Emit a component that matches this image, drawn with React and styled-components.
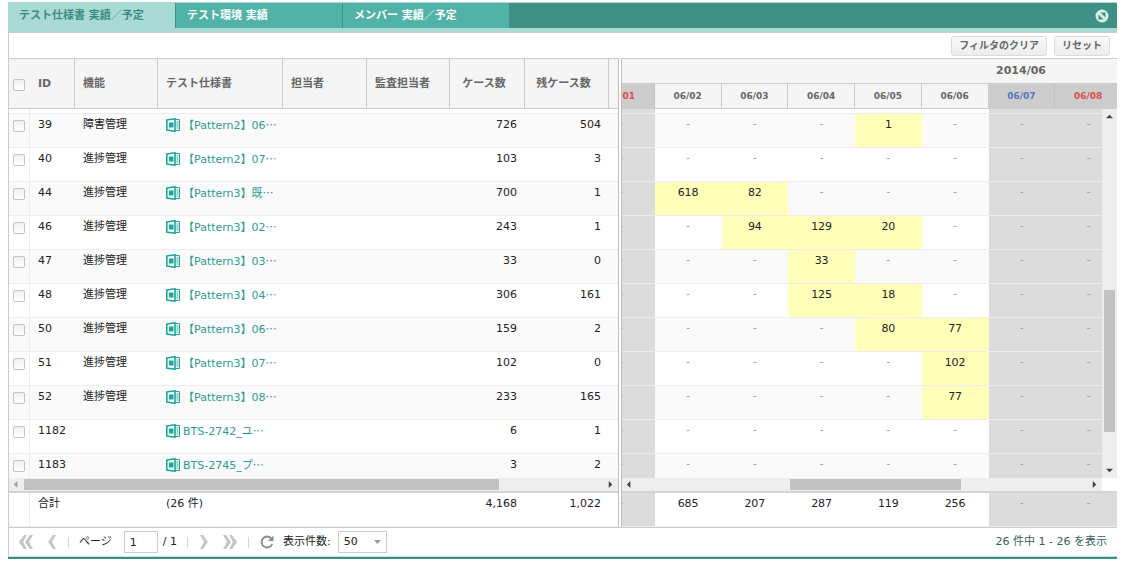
import React from "react";
import styled, { createGlobalStyle, css } from "styled-components";

const Global = createGlobalStyle`
  *, *::before, *::after { box-sizing: border-box; }
  body {
    margin: 0;
    background: #fff;
    color: #222;
    font: 11px/14px "DejaVu Sans", "Noto Sans CJK JP", sans-serif;
  }
  button, input, select { font: inherit; color: inherit; margin: 0; }
`;

const Page = styled.div`
  padding: 2px 7px 0 8px;
`;

const Panel = styled.section`
  border-bottom: 2px solid #368f83;
`;

const TabBar = styled.nav`
  display: flex;
  align-items: stretch;
  height: 31px;
  background: #3f9183;
  border-top: 1px solid #a9dad5;
  border-bottom: 1px solid #c8cfce;
  box-shadow: inset 0 -4px #a9dad5;
`;

const Tab = styled.button`
  width: 167px;
  height: ${(p) => (p.$active ? 29 : 25)}px;
  padding: 0 11px ${(p) => (p.$active ? 4 : 0)}px;
  border: 0;
  border-left: ${(p) => (p.$active ? 0 : 1)}px solid #3f9183;
  background: ${(p) => (p.$active ? "#a9dad5" : "#50b3a6")};
  color: ${(p) => (p.$active ? "#3b8c80" : "#fff")};
  font-weight: bold;
  text-align: left;
  white-space: nowrap;
`;

const ToolButton = styled.button`
  display: grid;
  place-items: center;
  width: 14px;
  height: 26px;
  margin: 0 8px 0 auto;
  padding: 0;
  border: 0;
  background: none;
`;

const Frame = styled.div`
  border-left: 1px solid #ccc;
`;

const Actions = styled.div`
  display: flex;
  justify-content: flex-end;
  align-items: center;
  gap: 7px;
  height: 25px;
  padding-right: 7px;
`;

const ActionButton = styled.button`
  height: 20px;
  padding: 0 7px;
  border: 1px solid #dcdcdc;
  border-radius: 3px;
  background: linear-gradient(#f8f8f8, #ededed);
  color: #666;
  font-size: 10px;
  font-weight: bold;
  line-height: 16px;
`;

const Panes = styled.div`
  display: grid;
  grid-template-columns: 610px minmax(0, 1fr);
  gap: 2px;
  border-bottom: 1px solid #ccc;
`;

const Pane = styled.div`
  min-width: 0;
  border: 0 solid #c0c0c0;
  border-right-width: ${(p) => (p.$side === "left" ? 1 : 0)}px;
  border-left-width: ${(p) => (p.$side === "left" ? 0 : 1)}px;
`;

const HeadClip = styled.div`
  height: 51px;
  overflow: hidden;
  background: #f5f5f5;
  border-top: 1px solid #ccc;
  border-bottom: 1px solid #ccc;
`;

const BodyRow = styled.div`
  display: flex;
  height: 369px;
`;

const BodyClip = styled.div`
  flex: 1;
  min-width: 0;
  overflow: hidden;
`;

const FootClip = styled.div`
  height: 36px;
  overflow: hidden;
  border-top: 2px solid #d4d4d4;
`;

const Grid = styled.table`
  width: 100%;
  table-layout: fixed;
  border-collapse: separate;
  border-spacing: 0;
`;

/* The calendar is scrolled sideways, so half of its first day is cut off. */
const CalendarGrid = styled(Grid)`
  width: calc(100% + ${(p) => (p.$bar ? 54 : 39)}px);
  margin-left: -34px;
`;

const HeadCell = styled.th`
  height: 49px;
  padding: 0 ${(p) => (p.$align ? 14 : 8)}px 0 8px;
  border-right: ${(p) => (p.$open ? 0 : 1)}px solid #ccc;
  color: #666;
  text-align: ${(p) => p.$align || "left"};
  white-space: nowrap;
`;

const CheckHead = styled.th`
  padding: 2px 0 0 4px;
`;

const MonthCell = styled.th`
  height: 25px;
  padding: 0 0 0 332px;
  border-bottom: 1px solid #ccc;
  color: #666;
`;

const dayColor = { sat: "#5577bb", sun: "#dd4b4b" };

const DayCell = styled.th`
  height: 24px;
  padding: 0;
  border-right: 1px solid ${(p) => (p.$day ? "#c2c2c2" : "#ccc")};
  background: ${(p) => (p.$day ? "#cdcdcd" : "#f5f5f5")};
  color: ${(p) => dayColor[p.$day] || "#666"};
  font-size: 9px;
`;

const Row = styled.tr`
  background: ${(p) => (p.$odd ? "#fafafa" : "#fff")};
`;

const cellBox = css`
  height: ${(p) => (p.$strip ? 5 : 34)}px;
  border-bottom: 1px solid #ededed;
  vertical-align: top;
  white-space: nowrap;
  overflow: hidden;
`;

const Cell = styled.td`
  ${cellBox}
  padding: ${(p) => (p.$strip ? 0 : 4)}px 8px 0;
  text-align: ${(p) => p.$align || "left"};
`;

const CheckCell = styled.td`
  ${cellBox}
  padding: ${(p) => (p.$strip ? 0 : 6)}px 0 0 4px;
  border-right: 1px solid #ededed;
`;

const PlanCell = styled.td`
  ${cellBox}
  padding: ${(p) => (p.$strip ? 0 : p.$empty ? 3 : 4)}px 0 0;
  background: ${(p) => (p.$off ? "#dcdcdc" : p.$hot ? "#ffffb9" : "transparent")};
  color: ${(p) => (p.$empty ? "#999" : "#222")};
  font-size: ${(p) => (p.$empty ? 10 : 11)}px;
  text-align: center;
`;

const Check = styled.input.attrs({ type: "checkbox" })`
  appearance: none;
  display: block;
  width: 12px;
  height: 12px;
  border: 1px solid #c4c4c4;
  border-radius: 2px;
  background: linear-gradient(#f0f0f0, #fff);
`;

const SpecLink = styled.a`
  display: flex;
  align-items: center;
  gap: 3px;
  height: 14px;
  color: #2b9d8d;
  text-decoration: none;

  & > svg { flex: none; }
`;

const SpecCell = styled(Cell)`
  padding-right: 0;
`;

const More = styled.span`
  font-family: "Noto Sans CJK JP", sans-serif;
`;

const HBar = styled.div`
  display: flex;
  align-items: center;
  height: 13px;
  margin-right: ${(p) => (p.$corner ? 15 : 0)}px;
  background: #eee;
`;

const VBar = styled.div`
  display: flex;
  flex-direction: column;
  align-items: center;
  width: 15px;
  background: #eee;
`;

const Track = styled.div`
  flex: 1;
  display: flex;
  flex-direction: ${(p) => (p.$vertical ? "column" : "row")};
`;

const Thumb = styled.div`
  flex: 0 0 ${(p) => p.$size}%;
  min-width: 11px;
  min-height: 11px;
  background: #c1c1c1;
`;

const Before = styled.div`
  flex: 0 0 ${(p) => p.$size}%;
`;

const ArrowBox = styled.span`
  display: grid;
  place-items: center;
  width: 15px;
  height: 15px;
  color: ${(p) => (p.$dim ? "#a0a0a0" : "#444")};
`;

const Pager = styled.footer`
  display: flex;
  align-items: center;
  height: 29px;
  padding: 0 10px 0 9px;
  border-bottom: 1px solid #d5dddb;
`;

const PagerButton = styled.button`
  display: grid;
  place-items: center;
  width: ${(p) => p.$w}px;
  height: 22px;
  padding: 0;
  border: 0;
  background: none;
`;

const Sep = styled.span`
  width: 1px;
  height: 11px;
  margin: 0 10px;
  background: #d8d8d8;
`;

const Gap = styled.span`
  width: ${(p) => p.$w}px;
`;

const PageInput = styled.input`
  width: 34px;
  height: 22px;
  margin: 0 5px 0 12px;
  padding: 0 5px;
  border: 1px solid #ccc;
  background: #fff;
`;

const SelectWrap = styled.span`
  display: grid;
  margin-left: 7px;
  align-items: center;

  & > * { grid-area: 1 / 1; }
  & > svg { justify-self: end; margin-right: 6px; pointer-events: none; }
`;

const Select = styled.select`
  appearance: none;
  width: 49px;
  height: 22px;
  padding: 0 5px;
  border: 1px solid #ccc;
  border-radius: 0;
  background: #fff;
`;

const Status = styled.span`
  margin-left: auto;
  color: #35605a;
`;

const arrows = {
  left: "M5 0v8L1 4z",
  right: "M2 0v8l4-4z",
  up: "M0 6h8L4 2z",
  down: "M0 2h8L4 6z",
};

const Arrow = ({ dir, dim }) => (
  <ArrowBox $dim={dim}>
    <svg width="7" height="7" viewBox="0 0 8 8" aria-hidden="true">
      <path d={arrows[dir]} fill="currentColor" />
    </svg>
  </ArrowBox>
);

const SheetIcon = () => (
  <svg width="14" height="14" viewBox="0 0 14 14" aria-hidden="true">
    <path d="M.8 2 9 .8v12.400L.8 12z" fill="#fff" stroke="#1ba896" strokeWidth="1.600" />
    <path d="M3 4.500h4.500v5H3z" fill="#1ba896" />
    <path d="M9 1.500h4.500v11H9" fill="none" stroke="#1ba896" />
    <path d="M10.500 4h2M10.500 6h2M10.500 8h2M10.500 10h2" stroke="#1ba896" />
  </svg>
);

const Chevron = ({ double, back }) => (
  <svg width={double ? 14 : 8} height="14" viewBox={double ? "0 0 14 14" : "0 0 8 14"} aria-hidden="true">
    <g fill="#c6c6c6" transform={back ? `translate(${double ? 14 : 8} 0) scale(-1 1)` : undefined}>
      <path d="M0 0h3l5 7-5 7H0l4-7z" />
      {double && <path d="M6 0h3l5 7-5 7H6l4-7z" />}
    </g>
  </svg>
);

const specs = [
  ["39", "障害管理", "【Pattern2】06", "726", "504", [0, 0, 0, 1, 0]],
  ["40", "進捗管理", "【Pattern2】07", "103", "3", [0, 0, 0, 0, 0]],
  ["44", "進捗管理", "【Pattern3】既", "700", "1", [618, 82, 0, 0, 0]],
  ["46", "進捗管理", "【Pattern3】02", "243", "1", [0, 94, 129, 20, 0]],
  ["47", "進捗管理", "【Pattern3】03", "33", "0", [0, 0, 33, 0, 0]],
  ["48", "進捗管理", "【Pattern3】04", "306", "161", [0, 0, 125, 18, 0]],
  ["50", "進捗管理", "【Pattern3】06", "159", "2", [0, 0, 0, 80, 77]],
  ["51", "進捗管理", "【Pattern3】07", "102", "0", [0, 0, 0, 0, 102]],
  ["52", "進捗管理", "【Pattern3】08", "233", "165", [0, 0, 0, 0, 77]],
  ["1182", "", "BTS-2742_ユ", "6", "1", [0, 0, 0, 0, 0]],
  ["1183", "", "BTS-2745_プ", "3", "2", [0, 0, 0, 0, 0]],
];

const days = [
  ["06/01", "sun"], ["06/02"], ["06/03"], ["06/04"],
  ["06/05"], ["06/06"], ["06/07", "sat"], ["06/08", "sun"],
];

const Cols = () => (
  <colgroup>
    {[21, 45, 83, 125, 84, 83, 75, 84, 9].map((w, i) => (
      <col key={i} width={w} />
    ))}
  </colgroup>
);

const DayCells = ({ values, total, strip }) =>
  days.map(([date, day], i) => {
    const value = (!day && values[i - 1]) || 0;
    return (
      <PlanCell key={date} $strip={strip} $off={!!day} $hot={!total && value > 0} $empty={!value}>
        {strip ? null : value || "-"}
      </PlanCell>
    );
  });

function SpecPane() {
  return (
    <Pane $side="left">
      <HeadClip>
        <Grid>
          <Cols />
          <thead>
            <tr>
              <CheckHead><Check aria-label="すべて選択" /></CheckHead>
              {["ID", "機能", "テスト仕様書", "担当者", "監査担当者"].map((t) => (
                <HeadCell key={t}>{t}</HeadCell>
              ))}
              <HeadCell $align="center">ケース数</HeadCell>
              <HeadCell $align="center">残ケース数</HeadCell>
              <HeadCell $open />
            </tr>
          </thead>
        </Grid>
      </HeadClip>
      <BodyRow>
        <BodyClip>
          <Grid>
            <Cols />
            <tbody>
              <Row>
                <CheckCell $strip />
                <Cell $strip colSpan={8} />
              </Row>
              {specs.map(([id, area, name, cases, left], i) => (
                <Row key={id} $odd={i % 2 === 0}>
                  <CheckCell><Check aria-label={id} /></CheckCell>
                  <Cell>{id}</Cell>
                  <Cell>{area}</Cell>
                  <SpecCell>
                    <SpecLink href="#">
                      <SheetIcon />
                      <span>{name}<More>…</More></span>
                    </SpecLink>
                  </SpecCell>
                  <Cell />
                  <Cell />
                  <Cell $align="right">{cases}</Cell>
                  <Cell $align="right">{left}</Cell>
                  <Cell />
                </Row>
              ))}
            </tbody>
          </Grid>
        </BodyClip>
      </BodyRow>
      <HBar>
        <Arrow dir="left" dim />
        <Track><Thumb $size={82} /></Track>
        <Arrow dir="right" />
      </HBar>
      <FootClip>
        <Grid>
          <Cols />
          <tbody>
            <tr>
              <CheckCell />
              <Cell colSpan={2}>合計</Cell>
              <Cell>(26 件)</Cell>
              <Cell />
              <Cell />
              <Cell $align="right">4,168</Cell>
              <Cell $align="right">1,022</Cell>
              <Cell />
            </tr>
          </tbody>
        </Grid>
      </FootClip>
    </Pane>
  );
}

function CalendarPane() {
  return (
    <Pane $side="right">
      <HeadClip>
        <CalendarGrid>
          <thead>
            <tr><MonthCell colSpan={8}>2014/06</MonthCell></tr>
            <tr>
              {days.map(([date, day]) => (
                <DayCell key={date} $day={day}>{date}</DayCell>
              ))}
            </tr>
          </thead>
        </CalendarGrid>
      </HeadClip>
      <BodyRow>
        <BodyClip>
          <CalendarGrid $bar>
            <tbody>
              <Row><DayCells strip values={[]} /></Row>
              {specs.map((row, i) => (
                <Row key={row[0]} $odd={i % 2 === 0}>
                  <DayCells values={row[5]} />
                </Row>
              ))}
            </tbody>
          </CalendarGrid>
        </BodyClip>
        <VBar>
          <Arrow dir="up" />
          <Track $vertical>
            <Before $size={49} />
            <Thumb $size={42} />
          </Track>
          <Arrow dir="down" />
        </VBar>
      </BodyRow>
      <HBar $corner>
        <Arrow dir="left" />
        <Track>
          <Before $size={34} />
          <Thumb $size={38} />
        </Track>
        <Arrow dir="right" />
      </HBar>
      <FootClip>
        <CalendarGrid>
          <tbody>
            <tr><DayCells total values={[685, 207, 287, 119, 256]} /></tr>
          </tbody>
        </CalendarGrid>
      </FootClip>
    </Pane>
  );
}

export default function App() {
  return (
    <Page>
      <Global />
      <Panel>
        <TabBar>
          <Tab $active>テスト仕様書 実績／予定</Tab>
          <Tab>テスト環境 実績</Tab>
          <Tab>メンバー 実績／予定</Tab>
          <ToolButton aria-label="切り離す">
            <svg width="14" height="14" viewBox="0 0 14 14" aria-hidden="true">
              <circle cx="7" cy="7" r="6.500" fill="#d9eeeb" />
              <path d="M5.500 3.500h5v5z" fill="#3f9183" />
              <path d="M3.500 5.500v5h5z" fill="#3f9183" />
            </svg>
          </ToolButton>
        </TabBar>
        <Frame>
          <Actions>
            <ActionButton>フィルタのクリア</ActionButton>
            <ActionButton>リセット</ActionButton>
          </Actions>
          <Panes>
            <SpecPane />
            <CalendarPane />
          </Panes>
          <Pager>
            <PagerButton $w={16} aria-label="最初のページ"><Chevron double back /></PagerButton>
            <Gap $w={12} />
            <PagerButton $w={12} aria-label="前のページ"><Chevron back /></PagerButton>
            <Sep />
            <label htmlFor="page">ページ</label>
            <PageInput id="page" defaultValue="1" />
            <span>/ 1</span>
            <Sep />
            <PagerButton $w={12} aria-label="次のページ"><Chevron /></PagerButton>
            <Gap $w={12} />
            <PagerButton $w={16} aria-label="最後のページ"><Chevron double /></PagerButton>
            <Sep />
            <PagerButton $w={16} aria-label="更新">
              <svg width="14" height="14" viewBox="0 0 14 14" aria-hidden="true">
                <path d="M11.500 3.600A5.500 5.500 0 1 0 12.300 9" fill="none" stroke="#8c8c8c" strokeWidth="1.800" />
                <path d="M13.500.5v5.500H8z" fill="#8c8c8c" />
              </svg>
            </PagerButton>
            <Gap $w={8} />
            <label htmlFor="size">表示件数:</label>
            <SelectWrap>
              <Select id="size" defaultValue="50">
                <option>50</option>
                <option>100</option>
              </Select>
              <svg width="7" height="4" viewBox="0 0 7 4" aria-hidden="true">
                <path d="M0 0h7L3.500 4z" fill="#999" />
              </svg>
            </SelectWrap>
            <Status>26 件中 1 - 26 を表示</Status>
          </Pager>
        </Frame>
      </Panel>
    </Page>
  );
}
